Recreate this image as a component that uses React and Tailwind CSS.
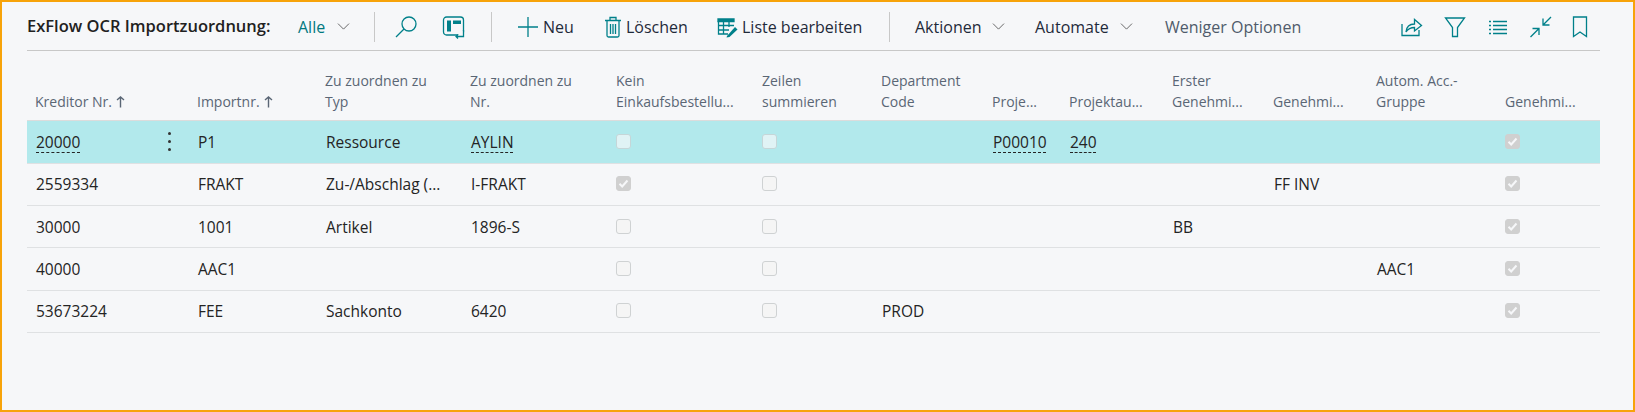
import { ChevronDown } from 'lucide-react';

const FONT = "font-['Open_Sans','Noto_Sans',sans-serif]";
const COLS = 'grid grid-cols-[162px_128px_145px_146px_146px_119px_111px_77px_103px_101px_103px_129px_103px]';

const headers = [
  ['', 'Kreditor Nr.', true],
  ['', 'Importnr.', true],
  ['Zu zuordnen zu', 'Typ'],
  ['Zu zuordnen zu', 'Nr.'],
  ['Kein', 'Einkaufsbestellu...'],
  ['Zeilen', 'summieren'],
  ['Department', 'Code'],
  ['', 'Proje...'],
  ['', 'Projektau...'],
  ['Erster', 'Genehmi...'],
  ['', 'Genehmi...'],
  ['Autom. Acc.-', 'Gruppe'],
  ['', 'Genehmi...'],
];

const rows = [
  { no: '20000', imp: 'P1', typ: 'Ressource', nr: 'AYLIN', proj: 'P00010', task: '240', selected: true },
  { no: '2559334', imp: 'FRAKT', typ: 'Zu-/Abschlag (...', nr: 'I-FRAKT', noPo: true, appr2: 'FF INV' },
  { no: '30000', imp: '1001', typ: 'Artikel', nr: '1896-S', appr1: 'BB' },
  { no: '40000', imp: 'AAC1', acc: 'AAC1' },
  { no: '53673224', imp: 'FEE', typ: 'Sachkonto', nr: '6420', dept: 'PROD' },
];

const Divider = ({ className }) => <div className={`h-[30px] w-px bg-[#c8c8c8] ${className}`} />;

const Icon = ({ className, w = 24, h = 24, children }) => (
  <svg
    width={w}
    height={h}
    viewBox={`0 0 ${w} ${h}`}
    fill="none"
    stroke="#00808a"
    strokeWidth="1.3"
    className={`shrink-0 ${className || ''}`}
  >
    {children}
  </svg>
);

const Chevron = ({ className }) => (
  <ChevronDown size={21} strokeWidth={1} color="#555" className={`shrink-0 ${className || ''}`} />
);

const Checkbox = ({ checked, onSelected }) => {
  // Disabled look: filled grey when ticked, translucent on the highlighted row
  let box = 'border-[#cfd2d3] bg-[#f5f5f5]';
  if (checked) box = 'border-[#d0d0d0] bg-[#d0d0d0]';
  else if (onSelected) box = 'border-[#c5d6d8] bg-[#e0f3f5]';

  return (
    <div className="flex h-full items-center pb-[1px]">
      <div className={`flex h-[15px] w-[15px] items-center justify-center rounded-[3px] border-[1.5px] ${box}`}>
        {checked && (
          <svg width="11" height="11" viewBox="0 0 11 11" fill="none" stroke="#f6f7f9" strokeWidth="2">
            <path d="M1.5 5.8 L4.2 8.5 L9.5 2.5" />
          </svg>
        )}
      </div>
    </div>
  );
};

const Cell = ({ children, link }) => (
  <div className="flex h-full items-center pt-[1px] pl-[9px] text-[15.5px] whitespace-nowrap text-[#242424]">
    <span className={link ? 'underline decoration-dashed decoration-1 underline-offset-[4px]' : ''}>{children}</span>
  </div>
);

const Toolbar = () => (
  <div className="mr-[33px] ml-[25px] flex h-[49px] items-center border-b border-[#c8c8c8] pt-[1px] text-[16px] text-[#1f2a3a]">
    <span className="w-[247px] shrink-0 whitespace-nowrap text-[16.5px] font-semibold text-[#212121]">
      ExFlow OCR Importzuordnung:
    </span>
    <span className="ml-[24px] w-[35px] font-medium text-[#00787f]">Alle</span>
    <Chevron />
    <Divider className="ml-[20px]" />
    <Icon className="ml-[19px]">
      <circle cx="15" cy="9" r="7" />
      <path d="M10 14 L2 22" />
    </Icon>
    <Icon className="ml-[24px]">
      <rect x="1.5" y="2" width="20" height="18" rx="3" />
      <rect x="5" y="5.5" width="4" height="11" fill="#00808a" stroke="none" />
      <rect x="11" y="5.5" width="8" height="3.5" fill="#00808a" stroke="none" />
      <path d="M14 21.5 H21.5 V15 M16 19.5 L14 21.5 L16 23.5" fill="#f6f7f9" />
    </Icon>
    <Divider className="ml-[25px]" />
    <Icon className="ml-[25px]" w={22} h={22}>
      <path d="M11 1 V21 M1 11 H21" />
    </Icon>
    <span className="ml-[4px] w-[33px]">Neu</span>
    <Icon className="ml-[28px]" w={18} h={22}>
      <path d="M3 5 V19.5 a1.5 1.5 0 0 0 1.5 1.5 H13.5 a1.5 1.5 0 0 0 1.5 -1.5 V5 M1 4.5 H17 M6 4.5 V1.5 H12 V4.5 M6.5 8 V18 M9 8 V18 M11.5 8 V18" />
    </Icon>
    <span className="ml-[4px] w-[64px] whitespace-nowrap">Löschen</span>
    <Icon className="ml-[27px]" w={22} h={22}>
      <path d="M1 3 H17 V5.5 H1 Z" fill="#00808a" />
      <path d="M1.5 5 V18 H11 M6.5 5 V18 M12 5 V11 M1.5 9.5 H17 M1.5 14 H12" />
      <path d="M10 20 L18 11 L20.5 13.5 L12.5 21 L9.5 21.5 Z" fill="#00808a" stroke="none" />
    </Icon>
    <span className="ml-[3px] w-[125px] whitespace-nowrap">Liste bearbeiten</span>
    <Divider className="ml-[22px]" />
    <span className="ml-[25px] w-[72px]">Aktionen</span>
    <Chevron className="ml-[1px]" />
    <span className="ml-[26px] w-[74px]">Automate</span>
    <Chevron className="ml-[7px]" />
    <span className="ml-[28px] w-[145px] whitespace-nowrap text-[#4f5b6b]">Weniger Optionen</span>
    <Icon className="ml-[89px]">
      <path d="M3 9 V20.5 H20 V15 M7 17 C7.5 11.5 11 9 15.5 9 V4.5 L22.5 10.5 L15.5 16 V12.5 C11.5 12.5 9 14 7 17 Z" />
    </Icon>
    <Icon className="ml-[21px]" w={22} h={22}>
      <path d="M1.5 2 H20.5 L13.5 11.5 V20.5 H8.5 V11.5 Z" />
    </Icon>
    <Icon className="ml-[22px]" w={20} h={20}>
      <path d="M1 4.5 H3 M5 4.5 H19 M1 8.5 H3 M5 8.5 H19 M1 12.5 H3 M5 12.5 H19 M1 16.5 H3 M5 16.5 H19" />
    </Icon>
    <Icon className="ml-[21px]">
      <path d="M1.5 22 L9.5 14 M3.5 13.5 H10 V20 M22 2 L14 10 M14 3.5 V10 H20.5" />
    </Icon>
    <Icon className="ml-[19px]" w={16} h={22}>
      <path d="M1.5 1 H14.5 V20.5 L8 16 L1.5 20.5 Z" />
    </Icon>
  </div>
);

const HeaderRow = () => (
  <div className={`${COLS} mr-[33px] ml-[25px] h-[70.4px] border-b border-[#dcdcdc] text-[14px] leading-[21px] text-[#5a6675]`}>
    {headers.map(([top, bottom, sorted], i) => (
      <div key={i} className="flex h-full flex-col justify-end pb-[8px] pl-2 whitespace-nowrap">
        {top && <span>{top}</span>}
        <span className="flex items-center gap-[4px]">
          {bottom}
          {sorted && (
            <svg width="9" height="12" viewBox="0 0 9 12" fill="none" stroke="#5a6675" strokeWidth="1.4">
              <path d="M4.5 11.5 V1 M1 4 L4.5 1 L8 4" />
            </svg>
          )}
        </span>
      </div>
    ))}
  </div>
);

const Row = ({ row }) => (
  <div className={`${COLS} mr-[33px] ml-[25px] h-[42.33px] border-b border-[#dfe1e3] ${row.selected ? 'bg-[#b2e9ec]' : ''}`}>
    <div className="relative">
      <Cell link={row.selected}>{row.no}</Cell>
      {row.selected && (
        <div className="absolute right-[17px] top-[10px] flex h-[21px] w-[6px] flex-col items-center justify-between py-[1px]">
          <span className="h-[3px] w-[3px] rounded-full bg-[#333]" />
          <span className="h-[3px] w-[3px] rounded-full bg-[#333]" />
          <span className="h-[3px] w-[3px] rounded-full bg-[#333]" />
        </div>
      )}
    </div>
    <Cell>{row.imp}</Cell>
    <Cell>{row.typ}</Cell>
    <Cell link={row.selected}>{row.nr}</Cell>
    <div className="pl-2"><Checkbox checked={row.noPo} onSelected={row.selected} /></div>
    <div className="pl-2"><Checkbox onSelected={row.selected} /></div>
    <Cell>{row.dept}</Cell>
    <Cell link={row.selected}>{row.proj}</Cell>
    <Cell link={row.selected}>{row.task}</Cell>
    <Cell>{row.appr1}</Cell>
    <Cell>{row.appr2}</Cell>
    <Cell>{row.acc}</Cell>
    <div className="pl-2"><Checkbox checked /></div>
  </div>
);

export default function App() {
  return (
    <div className={`${FONT} h-[412px] w-[1635px] overflow-hidden border-2 border-[#f7a30a] bg-[#f6f7f9]`}>
      <Toolbar />
      <HeaderRow />
      {rows.map((row) => (
        <Row key={row.no} row={row} />
      ))}
    </div>
  );
}
